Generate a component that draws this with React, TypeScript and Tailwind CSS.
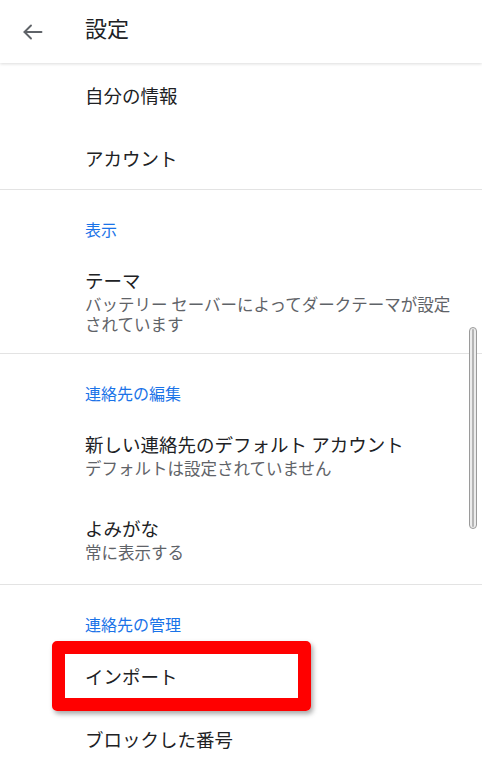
import React from 'react'

const font = { fontFamily: '"Noto Sans CJK JP", "Noto Sans", sans-serif' }

function BackArrow() {
  return (
    <svg width="20" height="16" viewBox="0 0 20 16" fill="none" stroke="#5f6368" strokeWidth="1.9" strokeLinecap="round" strokeLinejoin="round">
      <path d="M1.5 8H18.5" />
      <path d="M8 1.5L1.5 8L8 14.5" />
    </svg>
  )
}

function Divider() {
  return <div className="h-px w-full bg-[#e3e3e3]" />
}

function SectionHeading({ children }: { children: React.ReactNode }) {
  return (
    <div className="pb-[9px] pl-[85px] pt-[28px] text-[16px] leading-[22px] text-[#1a73e8]">
      {children}
    </div>
  )
}

function SingleItem({ children, highlight }: { children: React.ReactNode; highlight?: boolean }) {
  return (
    <div className="relative flex h-[63px] items-center pl-[85px] text-[18.5px] leading-[24px] text-[#202124]">
      {highlight && (
        <div className="absolute left-[52px] top-[-3px] h-[70px] w-[259px] rounded-[5px] border-[13px] border-[#ff0000] shadow-[2px_3px_5px_rgba(0,0,0,0.35)]" />
      )}
      <span className="relative">{children}</span>
    </div>
  )
}

function DoubleItem({ title, sub, className }: { title: string; sub: string; className?: string }) {
  return (
    <div className={`pl-[85px] pr-[24px] ${className ?? 'py-[19px]'}`}>
      <div className="text-[18.5px] leading-[24px] text-[#202124]">{title}</div>
      <div className="mt-[2px] text-[16.5px] leading-[20px] text-[#5f6368]">{sub}</div>
    </div>
  )
}

export default function App() {
  return (
    <div className="relative h-[767px] w-[482px] overflow-hidden bg-white" style={font}>
      <header className="relative z-10 flex h-[63px] items-center bg-white shadow-[0_1px_3px_rgba(0,0,0,0.14)]">
        <div className="ml-[23px] flex w-[20px]">
          <BackArrow />
        </div>
        <h1 className="mb-[10px] ml-[42px] text-[22px] leading-[28px] text-[#202124]">設定</h1>
      </header>

      <main>
        <SingleItem>自分の情報</SingleItem>
        <SingleItem>アカウント</SingleItem>
        <Divider />

        <SectionHeading>表示</SectionHeading>
        <DoubleItem
          title="テーマ"
          sub="バッテリー セーバーによってダークテーマが設定されています"
          className="pb-[19px] pt-[19px]"
        />
        <Divider />

        <SectionHeading>連絡先の編集</SectionHeading>
        <DoubleItem title="新しい連絡先のデフォルト アカウント" sub="デフォルトは設定されていません" />
        <DoubleItem title="よみがな" sub="常に表示する" className="pb-[22px] pt-[19px]" />
        <Divider />

        <SectionHeading>連絡先の管理</SectionHeading>
        <SingleItem highlight>インポート</SingleItem>
        <SingleItem>ブロックした番号</SingleItem>
      </main>

      <div className="absolute left-[469px] top-[327px] h-[202px] w-[8px] rounded-full border border-[#9a9a9a] bg-[#ececec] p-[1px]">
        <div className="mx-auto h-full w-[2px] rounded-full bg-[#b5b5b5]" />
      </div>
    </div>
  )
}
